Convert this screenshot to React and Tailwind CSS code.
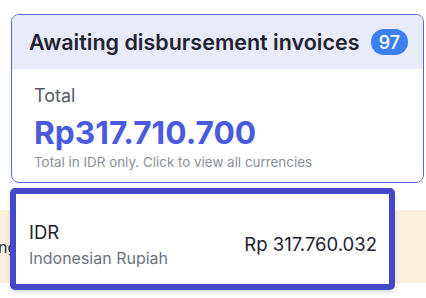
import React from 'react';

const App = () => {
  return (
    <div className="relative w-[426px] h-[298px] overflow-hidden bg-white font-['Inter',sans-serif]">
      <div className="ml-[11px] mt-[14px] w-[413px] h-[169px] border border-[#5566de] rounded-lg overflow-hidden">
        <div className="h-[54px] bg-[#e9eafa] flex items-center justify-between pl-[17px] pr-[15px]">
          <h2 className="text-[21.5px] font-semibold text-[#1f2230] leading-7">Awaiting disbursement invoices</h2>
          <span className="h-[26px] w-[37px] rounded-full bg-[#3b7ff0] text-white text-[18px] font-medium flex items-center justify-center">
            97
          </span>
        </div>
        <div className="pl-[22px] pt-[13px]">
          <p className="text-[18px] leading-7 text-[#555a63]">Total</p>
          <p className="mt-[4px] text-[31.7px] leading-[38px] font-bold text-[#4a5ade]">Rp317.710.700</p>
          <p className="mt-px text-[13.4px] leading-[18px] text-[#8a8f98]">Total in IDR only. Click to view all currencies</p>
        </div>
      </div>

      <div className="mt-[27px] h-[73px] bg-[#faf0dc] flex items-center">
        <span className="ml-[-2px] text-[16px] text-[#2a2f3a]">ng</span>
      </div>

      <div className="absolute left-[10px] top-[188px] w-[385px] h-[102px] bg-white border-[6px] border-[#4349c9] rounded-[5px] shadow-md flex items-center justify-between pl-[13px] pr-[12px] pt-[10px]">
        <div>
          <p className="text-[18.5px] leading-[26px] text-[#1f2230]">IDR</p>
          <p className="mt-[2px] text-[16px] leading-[22px] text-[#6b7280]">Indonesian Rupiah</p>
        </div>
        <p className="text-[18.5px] leading-[26px] text-[#1f2230]">Rp 317.760.032</p>
      </div>
    </div>
  );
};

export default App;
